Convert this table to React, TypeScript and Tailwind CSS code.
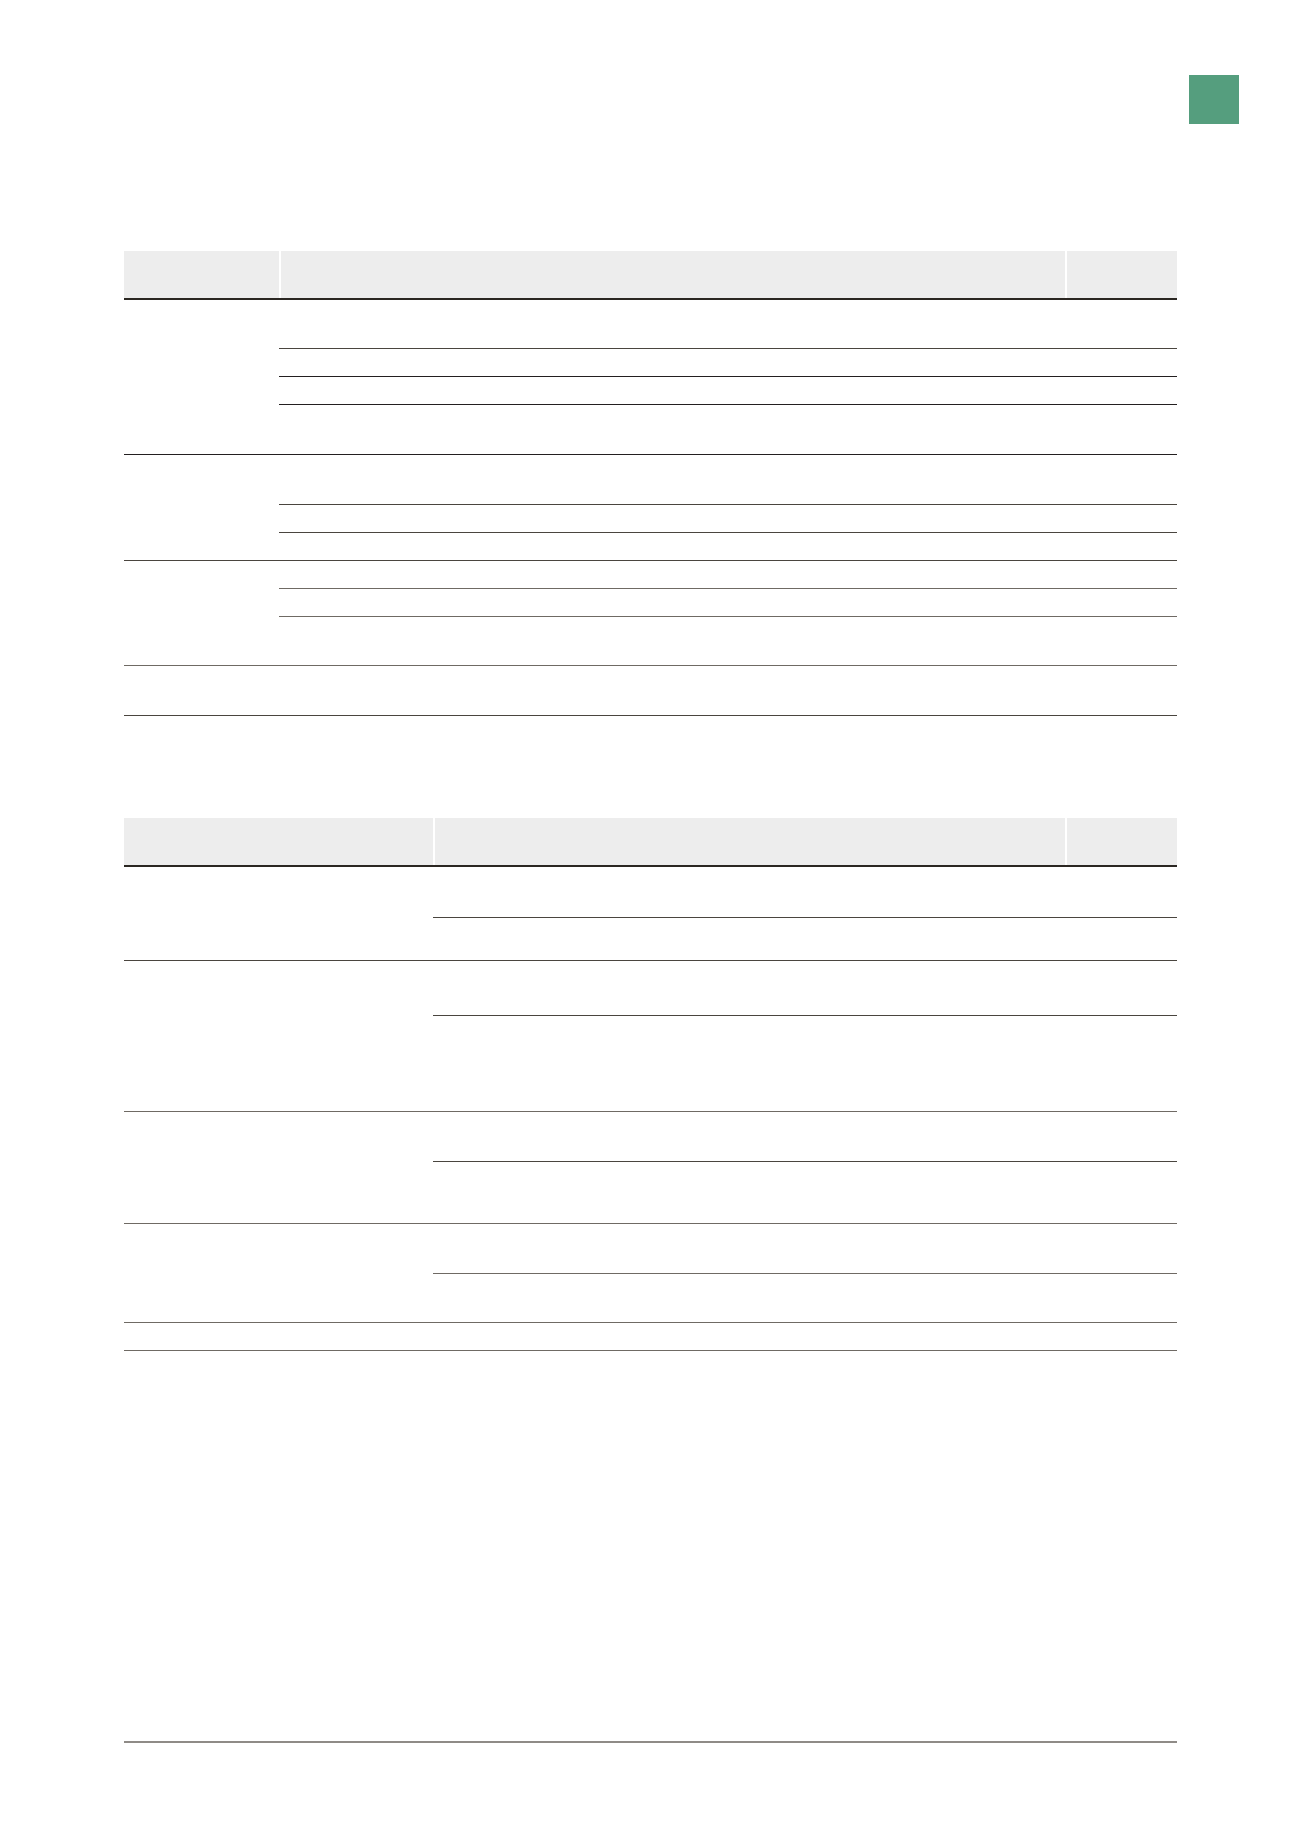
type Row = { h: string; line: string };
type Group = { rows: Row[] };

const DARK = 'border-[#231f20]';
const MID = 'border-[#4a453f]';
const GRAY = 'border-[#6f6a64]';

// first table: narrow label column, wide description, value column
const tableOne: Group[] = [
  {
    rows: [
      { h: 'h-[49px]', line: MID },
      { h: 'h-[28px]', line: DARK },
      { h: 'h-[28px]', line: DARK },
      { h: 'h-[50px]', line: DARK },
    ],
  },
  {
    rows: [
      { h: 'h-[50px]', line: MID },
      { h: 'h-[28px]', line: MID },
      { h: 'h-[28px]', line: MID },
    ],
  },
  {
    rows: [
      { h: 'h-[28px]', line: GRAY },
      { h: 'h-[28px]', line: GRAY },
      { h: 'h-[49px]', line: GRAY },
    ],
  },
  { rows: [{ h: 'h-[50px]', line: MID }] },
];

const tableTwo: Group[] = [
  {
    rows: [
      { h: 'h-[51px]', line: MID },
      { h: 'h-[43px]', line: MID },
    ],
  },
  {
    rows: [
      { h: 'h-[55px]', line: MID },
      { h: 'h-[96px]', line: GRAY },
    ],
  },
  {
    rows: [
      { h: 'h-[50px]', line: MID },
      { h: 'h-[62px]', line: GRAY },
    ],
  },
  {
    rows: [
      { h: 'h-[50px]', line: GRAY },
      { h: 'h-[49px]', line: GRAY },
    ],
  },
  { rows: [{ h: 'h-[28px]', line: GRAY }] },
];

const Table = ({ groups, firstCol }: { groups: Group[]; firstCol: string }) => (
  <div className="w-[1053px] flex flex-col">
    {/* Header */}
    <div className="flex h-[49px] border-b-2 border-[#2b2722]">
      <div className={`${firstCol} bg-[#ededed]`} />
      <div className="flex-1 bg-[#ededed] border-l-2 border-white" />
      <div className="w-[112px] bg-[#ededed] border-l-2 border-white" />
    </div>

    {groups.map((group, gi) => (
      <div key={gi} className="flex">
        <div className={`${firstCol} flex flex-col justify-end`}>
          <div className={`border-b ${group.rows[group.rows.length - 1].line}`} />
        </div>
        <div className="flex-1 flex flex-col">
          {group.rows.map((row, ri) => (
            <div key={ri} className={`${row.h} border-b ${row.line} flex`}>
              <div className="flex-1" />
              <div className="w-[112px]" />
            </div>
          ))}
        </div>
      </div>
    ))}
  </div>
);

const App = () => {
  return (
    <div className="w-[1300px] h-[1839px] bg-white flex flex-col font-['Liberation_Sans',sans-serif]">
      {/* Section tab marker */}
      <div className="flex justify-end pt-[75px] pr-[61px]">
        <div className="w-[50px] h-[49px] bg-[#559e7e]" />
      </div>

      <div className="pl-[124px] pt-[127px]">
        <Table groups={tableOne} firstCol="w-[155px]" />
      </div>

      <div className="pl-[124px] pt-[102px]">
        <Table groups={tableTwo} firstCol="w-[309px]" />
      </div>

      {/* Footer rule */}
      <div className="pl-[124px] pt-[390px]">
        <div className="w-[1053px] border-t-2 border-[#8f8b87]" />
      </div>
    </div>
  );
};

export default App;
